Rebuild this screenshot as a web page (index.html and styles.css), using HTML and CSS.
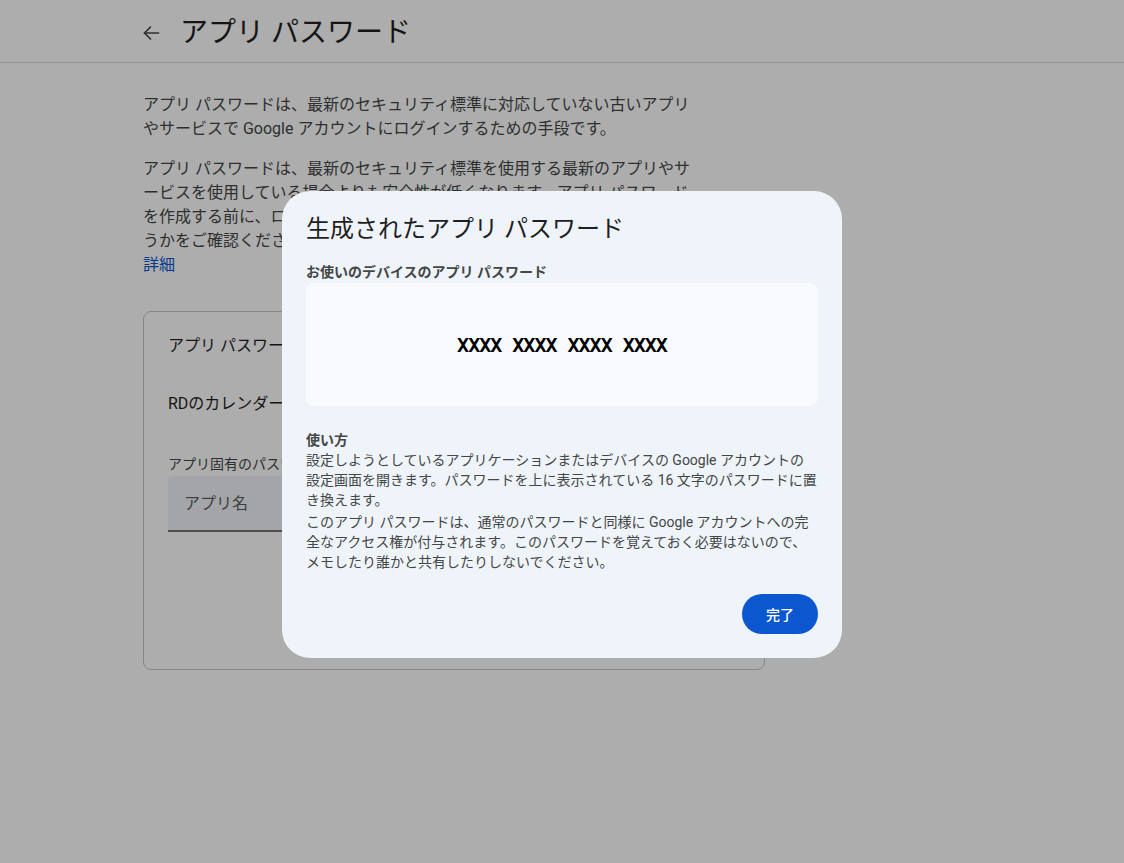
FILE: index.html
```html
<!DOCTYPE html>
<html lang="ja">
  <head>
    <meta charset="utf-8" />
    <meta name="viewport" content="width=device-width, initial-scale=1" />
    <title>アプリ パスワード</title>
    <link rel="stylesheet" href="styles.css">
  </head>
  <body>
    <!-- Page header -->
    <header class="page-header">
      <button class="back-btn" aria-label="戻る">
        <svg width="24" height="24" viewBox="0 0 24 24" fill="none" xmlns="http://www.w3.org/2000/svg">
          <path d="M19.5 12H5.5" stroke="#444746" stroke-width="1.7" stroke-linecap="round"/>
          <path d="M11.5 6L5.5 12L11.5 18" stroke="#444746" stroke-width="1.7" stroke-linecap="round" stroke-linejoin="round"/>
        </svg>
      </button>
      <h1 class="page-title">アプリ パスワード</h1>
    </header>

    <main class="page-main">
      <p class="intro">アプリ パスワードは、最新のセキュリティ標準に対応していない古いアプリやサービスで Google アカウントにログインするための手段です。</p>
      <p class="intro">アプリ パスワードは、最新のセキュリティ標準を使用する最新のアプリやサービスを使用している場合よりも安全性が低くなります。アプリ パスワードを作成する前に、ログインに使うアプリでより安全な方法が利用できるかどうかをご確認ください。</p>
      <a class="more-link" href="#">詳細</a>

      <section class="card">
        <div class="card-title">アプリ パスワード</div>
        <div class="entry">RDのカレンダー同期</div>
        <label class="field-label" for="app-name">アプリ固有のパスワードを作成するアプリの名前を入力してください。</label>
        <div class="field">
          <input id="app-name" class="field-input" type="text" placeholder="アプリ名" />
        </div>
        <div class="card-actions">
          <button class="text-btn">作成</button>
        </div>
      </section>
    </main>

    <!-- Generated password dialog -->
    <div class="scrim">
      <div class="dialog" role="dialog" aria-labelledby="dialog-title">
        <h2 id="dialog-title" class="dialog-title">生成されたアプリ パスワード</h2>
        <div class="pw-label">お使いのデバイスのアプリ パスワード</div>
        <div class="pw-box">
          <span class="pw-text">XXXX XXXX XXXX XXXX</span>
        </div>
        <div class="howto">
          <div class="howto-title">使い方</div>
          <p>設定しようとしているアプリケーションまたはデバイスの Google アカウントの設定画面を開きます。パスワードを上に表示されている 16 文字のパスワードに置き換えます。</p>
          <p>このアプリ パスワードは、通常のパスワードと同様に Google アカウントへの完全なアクセス権が付与されます。このパスワードを覚えておく必要はないので、メモしたり誰かと共有したりしないでください。</p>
        </div>
        <div class="dialog-actions">
          <button class="done-btn">完了</button>
        </div>
      </div>
    </div>
  </body>
</html>
```

FILE: styles.css
```css
/* Base */
body {
  margin: 0;
  background: #fff;
  color: #1f1f1f;
  font-family: Roboto, "Noto Sans CJK JP", sans-serif;
}

button {
  font-family: inherit;
}

/* Header */
.page-header {
  display: flex;
  align-items: center;
  height: 63px;
  padding: 4px 0 0 139px;
  box-sizing: border-box;
  border-bottom: 1px solid #dadce0;
}

.back-btn {
  width: 24px;
  height: 24px;
  padding: 0;
  margin-right: 17px;
  border: none;
  background: none;
  display: flex;
}

.page-title {
  margin: 0;
  font-size: 28px;
  font-weight: 400;
  line-height: 36px;
  color: #1f1f1f;
}

/* Main content */
.page-main {
  width: 622px;
  padding: 30px 0 40px 143px;
}

.intro {
  max-width: 556px;
  margin: 0 0 16px;
  font-size: 16px;
  line-height: 24px;
  color: #444746;
}

.more-link {
  display: block;
  margin-top: -16px;
  font-size: 16px;
  line-height: 24px;
  color: #0b57d0;
  text-decoration: none;
}

.card {
  margin-top: 34px;
  padding: 22px 24px 24px;
  border: 1px solid #c4c7c5;
  border-radius: 8px;
}

.card-title,
.entry {
  font-size: 16px;
  line-height: 24px;
  color: #1f1f1f;
}

.entry {
  margin-top: 34px;
}

.field-label {
  display: block;
  margin-top: 38px;
  font-size: 14px;
  line-height: 20px;
  color: #444746;
  white-space: nowrap;
}

.field {
  margin-top: 2px;
  background: #f0f4f9;
  border-radius: 4px 4px 0 0;
  border-bottom: 2px solid #747775;
}

.field-input {
  width: 100%;
  height: 54px;
  padding: 0 16px;
  box-sizing: border-box;
  border: none;
  background: transparent;
  font-family: inherit;
  font-size: 16px;
  color: #1f1f1f;
}

.field-input::placeholder {
  color: #5e5e5e;
}

.card-actions {
  display: flex;
  justify-content: flex-end;
  margin-top: 73px;
}

.text-btn {
  height: 40px;
  padding: 0 12px;
  border: none;
  background: none;
  color: #0b57d0;
  font-size: 14px;
  font-weight: 500;
}

/* Dialog */
.scrim {
  position: fixed;
  inset: 0;
  background: rgba(0, 0, 0, 0.32);
  display: flex;
  justify-content: center;
  align-items: flex-start;
  padding-top: 191px;
}

.dialog {
  width: 560px;
  padding: 24px;
  box-sizing: border-box;
  background: #eff3fa;
  border-radius: 28px;
}

.dialog-title {
  margin: 0;
  font-size: 24px;
  font-weight: 400;
  line-height: 28px;
  color: #1f1f1f;
}

.pw-label {
  margin-top: 19px;
  font-size: 14px;
  font-weight: 700;
  line-height: 20px;
  color: #444746;
}

.pw-box {
  margin-top: 1px;
  height: 123px;
  background: #f8fafd;
  border-radius: 8px;
  display: flex;
  align-items: center;
  justify-content: center;
}

.pw-text {
  font-family: "DejaVu Sans Mono", monospace;
  font-size: 20px;
  font-weight: 700;
  letter-spacing: -1px;
  color: #000;
}

.howto {
  margin-top: 24px;
  font-size: 14px;
  line-height: 20px;
  color: #444746;
}

.howto-title {
  font-weight: 700;
}

.howto p {
  margin: 0 0 2px;
}

.dialog-actions {
  display: flex;
  justify-content: flex-end;
  margin-top: 22px;
}

.done-btn {
  height: 40px;
  padding: 0 24px;
  border: none;
  border-radius: 20px;
  background: #0b57d0;
  color: #fff;
  font-size: 14px;
  font-weight: 500;
}
```
